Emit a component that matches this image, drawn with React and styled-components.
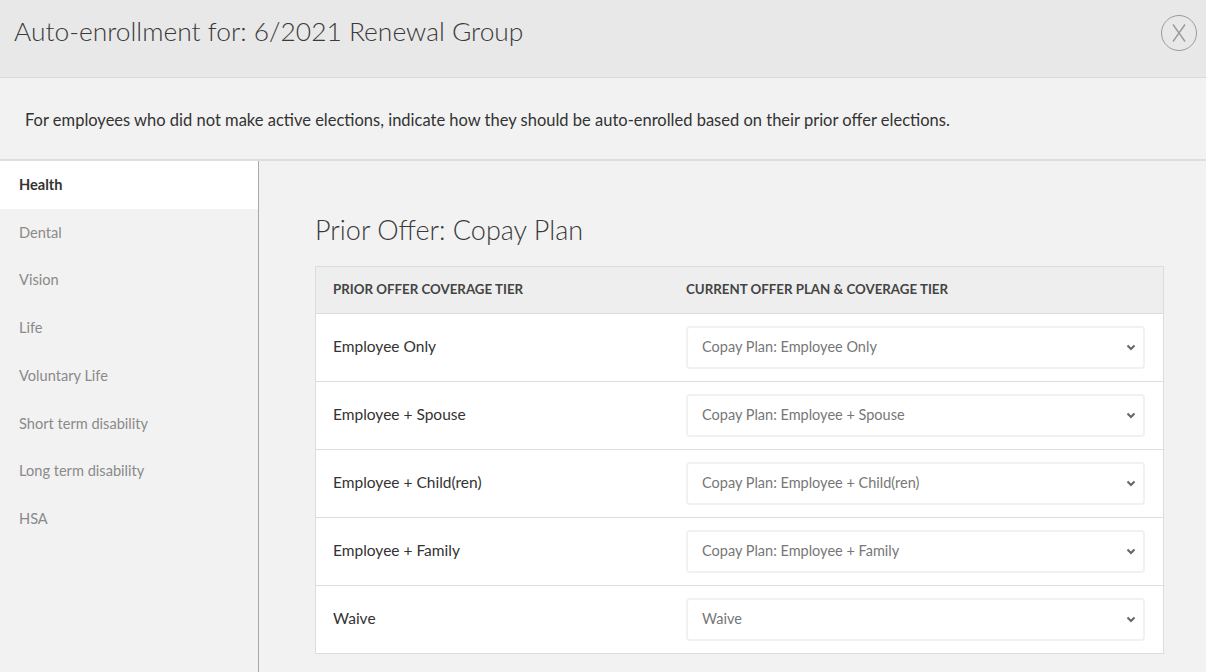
import { createGlobalStyle } from "styled-components";
import styled from "styled-components";

const GlobalStyle = createGlobalStyle`
  html, body {
    margin: 0;
    padding: 0;
    background: #f2f2f2;
    font-family: Lato, "Open Sans", sans-serif;
    color: #333;
  }
  * { box-sizing: border-box; }
`;

const Modal = styled.div`
  width: 1206px;
  height: 672px;
  display: flex;
  flex-direction: column;
  overflow: hidden;
  background: #f2f2f2;
`;

const Header = styled.div`
  display: flex;
  align-items: center;
  justify-content: space-between;
  height: 78px;
  padding: 0 9px 12px 14px;
  background: #e8e8e8;
  border-bottom: 1px solid #d9d9d9;
`;

const Title = styled.h1`
  margin: 0 0 4px;
  font-weight: 300;
  font-size: 26.4px;
  color: #3a3a3a;
`;

const CloseButton = styled.button`
  width: 36px;
  height: 36px;
  padding: 0;
  border: 1.3px solid #9a9a9a;
  border-radius: 50%;
  background: transparent;
  display: flex;
  align-items: center;
  justify-content: center;
  cursor: pointer;
`;

const Intro = styled.p`
  margin: 0;
  height: 83px;
  display: flex;
  align-items: center;
  padding: 2px 25px 0;
  font-size: 16.5px;
  color: #333;
  background: #f2f2f2;
  border-bottom: 2px solid #dedede;
`;

const Body = styled.div`
  display: flex;
  flex: 1;
`;

const Sidebar = styled.nav`
  width: 259px;
  flex-shrink: 0;
  border-right: 1px solid #a8a8a8;
  background: #f2f2f2;
`;

const NavItem = styled.div`
  height: 47.75px;
  display: flex;
  align-items: center;
  padding: 0 19px 1px;
  font-size: 14.6px;
  font-weight: ${(p) => (p.active ? 700 : 400)};
  color: ${(p) => (p.active ? "#333" : "#8a8a8a")};
  background: ${(p) => (p.active ? "#fff" : "transparent")};
`;

const Main = styled.div`
  flex: 1;
  padding: 50px 42px 0 56px;
`;

const SectionTitle = styled.h2`
  margin: 0 0 17px;
  font-weight: 300;
  font-size: 27px;
  line-height: 38px;
  color: #3a3a3a;
`;

const Table = styled.div`
  border: 1px solid #dcdcdc;
  background: #fff;
`;

const Row = styled.div`
  display: grid;
  grid-template-columns: 353px 1fr;
  align-items: center;
  height: ${(p) => (p.head ? "46px" : "68px")};
  padding: 0 18px ${(p) => (p.head ? "3px" : "1px")} 17px;
  background: ${(p) => (p.head ? "#eeeeee" : "#fff")};
  border-top: ${(p) => (p.first ? "none" : "1px solid #dcdcdc")};
`;

const HeadCell = styled.div`
  font-size: 13.3px;
  font-weight: 700;
  color: #444;
  text-transform: uppercase;
`;

const TierCell = styled.div`
  font-size: 15.5px;
  color: #333;
  margin-bottom: 2px;
`;

const Select = styled.div`
  height: 43px;
  display: flex;
  align-items: center;
  justify-content: space-between;
  padding: 0 7px 1px 14px;
  border: 2px solid #f1f1f1;
  border-radius: 4px;
  font-size: 14.5px;
  color: #777;
  background: #fff;
`;

const tiers = [
  ["Employee Only", "Copay Plan: Employee Only"],
  ["Employee + Spouse", "Copay Plan: Employee + Spouse"],
  ["Employee + Child(ren)", "Copay Plan: Employee + Child(ren)"],
  ["Employee + Family", "Copay Plan: Employee + Family"],
  ["Waive", "Waive"],
];

const navItems = [
  "Health",
  "Dental",
  "Vision",
  "Life",
  "Voluntary Life",
  "Short term disability",
  "Long term disability",
  "HSA",
];

function Chevron() {
  return (
    <svg width="10" height="10" viewBox="0 0 10 10">
      <path d="M1.5 3.5 L5 7 L8.5 3.5" fill="none" stroke="#666" strokeWidth="2" />
    </svg>
  );
}

export default function App() {
  return (
    <>
      <GlobalStyle />
      <Modal>
        <Header>
          <Title>Auto-enrollment for: 6/2021 Renewal Group</Title>
          <CloseButton aria-label="Close">
            <svg width="18" height="20" viewBox="0 0 18 20">
              <path d="M3 1.5 L15 18.5 M15 1.5 L3 18.5" stroke="#9a9a9a" strokeWidth="1.4" fill="none" />
            </svg>
          </CloseButton>
        </Header>
        <Intro>
          For employees who did not make active elections, indicate how they should be
          auto-enrolled based on their prior offer elections.
        </Intro>
        <Body>
          <Sidebar>
            {navItems.map((n, i) => (
              <NavItem key={n} active={i === 0}>
                {n}
              </NavItem>
            ))}
          </Sidebar>
          <Main>
            <SectionTitle>Prior Offer: Copay Plan</SectionTitle>
            <Table>
              <Row head first>
                <HeadCell>Prior Offer Coverage Tier</HeadCell>
                <HeadCell>Current Offer Plan &amp; Coverage Tier</HeadCell>
              </Row>
              {tiers.map(([tier, plan]) => (
                <Row key={tier}>
                  <TierCell>{tier}</TierCell>
                  <Select>
                    {plan}
                    <Chevron />
                  </Select>
                </Row>
              ))}
            </Table>
          </Main>
        </Body>
      </Modal>
    </>
  );
}
